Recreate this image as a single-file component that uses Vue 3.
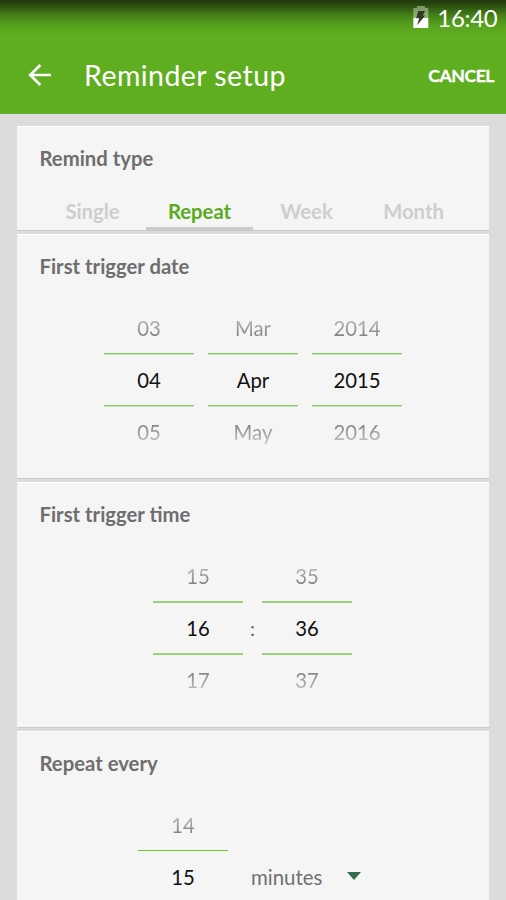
<script setup>
import { ref } from 'vue'

const tabs = ['Single', 'Repeat', 'Week', 'Month']
const activeTab = ref('Repeat')

const dateWheels = [
  ['03', '04', '05'],
  ['Mar', 'Apr', 'May'],
  ['2014', '2015', '2016'],
]
const hourWheel = ['15', '16', '17']
const minuteWheel = ['35', '36', '37']
const intervalWheel = ['14', '15']
</script>

<template>
  <div class="screen">
    <header class="top">
      <div class="status">
        <svg class="battery" width="16" height="23" viewBox="0 0 16 23">
          <path d="M4 0H12V2H15.3V12H0.3V2H4Z" fill="#fff" fill-opacity=".38" />
          <path d="M0.3 12H15.3V22H0.3Z" fill="#fff" />
          <path d="M5.2 5H12L9.8 9.6H12.2L4 19.2L6.3 12.3H3.2Z" fill="#30382b" />
        </svg>
        <span class="clock">16:40</span>
      </div>
      <div class="bar">
        <svg class="back" width="24" height="24" viewBox="0 0 24 24" fill="none" stroke="#fff" stroke-width="2.7">
          <path d="M13.3 2L3.2 12L13.3 22M3.2 12H24" />
        </svg>
        <h1 class="title">Reminder setup</h1>
        <button class="cancel">CANCEL</button>
      </div>
    </header>

    <main class="cards">
      <section class="card type">
        <h2>Remind type</h2>
        <nav class="tabs">
          <button
            v-for="t in tabs"
            :key="t"
            class="tab"
            :class="{ active: t === activeTab }"
            @click="activeTab = t"
          >{{ t }}</button>
        </nav>
      </section>

      <section class="card picker date">
        <h2>First trigger date</h2>
        <div class="wheels">
          <div v-for="w in dateWheels" :key="w[1]" class="wheel">
            <div class="prev">{{ w[0] }}</div>
            <div class="now">{{ w[1] }}</div>
            <div class="next">{{ w[2] }}</div>
          </div>
        </div>
      </section>

      <section class="card picker time">
        <h2>First trigger time</h2>
        <div class="wheels">
          <div class="wheel">
            <div class="prev">{{ hourWheel[0] }}</div>
            <div class="now">{{ hourWheel[1] }}</div>
            <div class="next">{{ hourWheel[2] }}</div>
          </div>
          <div class="colon">:</div>
          <div class="wheel">
            <div class="prev">{{ minuteWheel[0] }}</div>
            <div class="now">{{ minuteWheel[1] }}</div>
            <div class="next">{{ minuteWheel[2] }}</div>
          </div>
        </div>
      </section>

      <section class="card picker every">
        <h2>Repeat every</h2>
        <div class="wheels">
          <div class="wheel">
            <div class="prev">{{ intervalWheel[0] }}</div>
            <div class="now">{{ intervalWheel[1] }}</div>
          </div>
          <div class="unit">
            <span>minutes</span>
            <svg width="14" height="8" viewBox="0 0 14 8"><path d="M0 0H14L7 8Z" fill="#346b4b" /></svg>
          </div>
        </div>
      </section>
    </main>
  </div>
</template>

<style>
body {
  margin: 0;
  background: #dcdcdc;
}
</style>

<style scoped>
.screen {
  height: 900px;
  overflow: hidden;
  background: #dcdcdc;
  font-family: Lato, sans-serif;
  box-sizing: border-box;
}
.screen * {
  box-sizing: border-box;
}
button {
  border: 0;
  padding: 0;
  background: none;
  font-family: inherit;
  white-space: nowrap;
}
h1,
h2 {
  margin: 0;
  white-space: nowrap;
}
.top {
  height: 114px;
  background: linear-gradient(#1f380c 0, #27470e 4px, #366514 10px, #4a8b1a 18px, #59a51f 27px, #5fae20 36px);
  border-bottom: 1px solid #6aae38;
  color: #fff;
}
.status {
  height: 37px;
  display: flex;
  justify-content: flex-end;
  align-items: center;
  gap: 8px;
  padding-right: 8.5px;
}
.battery {
  margin-top: -3px;
}
.clock {
  margin-top: -2px;
  font-size: 24px;
  line-height: 36px;
  letter-spacing: -0.3px;
}
.bar {
  height: 76px;
  display: flex;
  align-items: center;
  padding: 0 12px 0 27px;
}
.back {
  margin-top: -1px;
}
.title {
  flex: 1;
  margin-left: 33px;
  font-size: 28.5px;
  font-weight: 400;
  line-height: 78px;
  letter-spacing: 0.45px;
}
.cancel {
  color: #fff;
  font-size: 17.7px;
  font-weight: 700;
  letter-spacing: -0.5px;
  -webkit-text-stroke: 0.3px #fff;
}
.cards {
  display: flex;
  flex-direction: column;
  gap: 3px;
  padding: 12px 17px 0;
}
.card {
  flex: none;
  background: #f5f5f5;
  border-top: 1px solid #fff;
  border-bottom: 1px solid #c9c9c9;
}
.card h2 {
  padding-left: 22.5px;
  font-size: 20.3px;
  line-height: 24px;
  font-weight: 700;
  color: #6e6e6e;
}
.type {
  height: 105px;
  display: flex;
  flex-direction: column;
  justify-content: space-between;
  padding-top: 19px;
}
.tabs {
  display: grid;
  grid-template-columns: repeat(4, 107px);
  padding-left: 22px;
}
.tab {
  height: 37px;
  border-bottom: 3px solid transparent;
  font-size: 20.25px;
  line-height: 36px;
  font-weight: 700;
  color: #cecece;
}
.tab.active {
  color: #5aaa1c;
  border-color: #cbcbcb;
}
.picker {
  height: 245.4px;
  padding-top: 19px;
}
.wheels {
  display: flex;
  justify-content: center;
  gap: 14px;
  margin-top: 24px;
}
.wheel {
  --line: #86c661;
  --line-soft: #cce7bc;
  width: 90px;
  font-size: 20.3px;
  text-align: center;
}
.prev,
.next {
  height: 51px;
  color: #6c6c6c;
}
.prev {
  line-height: 53px;
  mask-image: linear-gradient(transparent, #000 80%);
}
.next {
  line-height: 50px;
  mask-image: linear-gradient(#000 20%, transparent);
}
.now {
  height: 54px;
  line-height: 54px;
  color: #111;
  background: linear-gradient(
    var(--line) 0 1px,
    var(--line-soft) 1px 2px,
    transparent 2px 52px,
    var(--line) 52px 53px,
    var(--line-soft) 53px
  );
}
.time .wheels {
  gap: 0;
  padding-right: 1px;
}
.time .wheel {
  --line: #a3d483;
  --line-soft: #96cd70;
}
.colon {
  width: 19px;
  text-align: center;
  font-size: 20px;
  line-height: 156px;
  color: #666;
}
.every .wheels {
  justify-content: flex-start;
  gap: 23px;
  padding-left: 121px;
}
.every .wheel {
  --line: #72c532;
  --line-soft: #f0f4ed;
}
.unit {
  height: 156px;
  display: flex;
  align-items: center;
  gap: 24.5px;
  font-size: 20.45px;
  color: #707070;
}
.unit svg {
  margin-top: -2px;
}
</style>
